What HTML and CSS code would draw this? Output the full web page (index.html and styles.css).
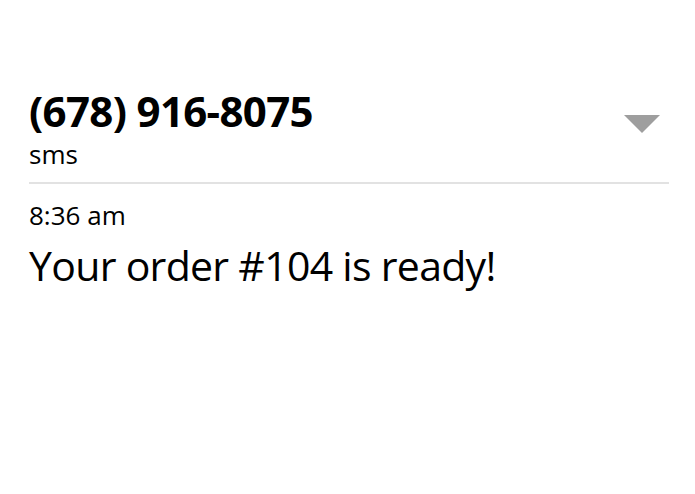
FILE: index.html
```html
<!DOCTYPE html>
<html lang="en">
<head>
  <meta charset="UTF-8">
  <meta name="viewport" content="width=device-width, initial-scale=1.0">
  <title>Message</title>
  <link rel="stylesheet" href="styles.css">
</head>
<body>
  <div class="message">
    <header class="sender">
      <div class="sender-info">
        <div class="number">(678) 916-8075</div>
        <div class="channel">sms</div>
      </div>
      <div class="expand"></div>
    </header>
    <div class="body">
      <div class="time">8:36 am</div>
      <p class="text">Your order #104 is ready!</p>
    </div>
  </div>
</body>
</html>
```

FILE: styles.css
```css
body {
  background-color: #FFFFFF;
  color: #000000;
  font-family: 'Open Sans', sans-serif;
  margin: 0;
  padding: 0;
}

.message {
  padding: 83px 26px 0 29px;
}

.sender {
  display: flex;
  justify-content: space-between;
  align-items: flex-start;
  padding-bottom: 13px;
  border-bottom: 2px solid #E2E2E2;
}

.number {
  font-size: 42px;
  font-weight: bold;
  line-height: 56px;
  letter-spacing: -0.65px;
}

.channel {
  font-size: 26px;
  line-height: 30px;
}

.expand {
  width: 0;
  height: 0;
  border-left: 18px solid transparent;
  border-right: 18px solid transparent;
  border-top: 18px solid #9E9E9E;
  margin-top: 32px;
  margin-right: 9px;
}

.body {
  padding-top: 15px;
}

.time {
  font-size: 26px;
  line-height: 32px;
}

.text {
  margin: 8px 0 0;
  font-size: 41px;
  line-height: 52px;
  letter-spacing: -0.7px;
}
```
